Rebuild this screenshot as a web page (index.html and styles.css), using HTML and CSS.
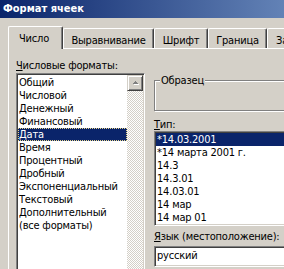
FILE: index.html
```html
<!DOCTYPE html>
<html lang="ru">

<head>
    <meta charset="UTF-8">
    <meta name="viewport" content="width=device-width, initial-scale=1.0">
    <title>Формат ячеек</title>
    <link rel="stylesheet" href="styles.css">
</head>

<body>

    <div class="window">
        <div class="titlebar">Формат ячеек</div>

        <div class="tabs">
            <div class="tab tab-active tab-number">Число</div>
            <div class="tab tab-align">Выравнивание</div>
            <div class="tab tab-font">Шрифт</div>
            <div class="tab tab-border">Граница</div>
            <div class="tab tab-fill">Заливка</div>
        </div>

        <div class="panel">
            <div class="col-left">
                <div class="label"><u>Ч</u>исловые форматы:</div>
                <div class="listbox format-list">
                    <ul class="items">
                        <li class="item">Общий</li>
                        <li class="item">Числовой</li>
                        <li class="item">Денежный</li>
                        <li class="item">Финансовый</li>
                        <li class="item item-selected">Дата</li>
                        <li class="item">Время</li>
                        <li class="item">Процентный</li>
                        <li class="item">Дробный</li>
                        <li class="item">Экспоненциальный</li>
                        <li class="item">Текстовый</li>
                        <li class="item">Дополнительный</li>
                        <li class="item">(все форматы)</li>
                    </ul>
                    <div class="scrollbar">
                        <div class="scroll-up">
                            <svg width="14" height="14" viewBox="0 0 14 14" shape-rendering="crispEdges">
                                <polygon points="5,9 8,6 11,9" fill="#ffffff" />
                                <polygon points="4,8 7,5 10,8" fill="#808080" />
                            </svg>
                        </div>
                    </div>
                </div>
            </div>

            <div class="col-right">
                <div class="groupbox">
                    <span class="group-label">Образец</span>
                </div>

                <div class="label type-label"><u>Т</u>ип:</div>
                <div class="listbox type-list">
                    <ul class="items">
                        <li class="item item-selected">*14.03.2001</li>
                        <li class="item">*14 марта 2001 г.</li>
                        <li class="item">14.3</li>
                        <li class="item">14.3.01</li>
                        <li class="item">14.03.01</li>
                        <li class="item">14 мар</li>
                        <li class="item">14 мар 01</li>
                    </ul>
                </div>

                <div class="label lang-label"><u>Я</u>зык (местоположение):</div>
                <div class="combo">русский</div>
            </div>
        </div>
    </div>

</body>

</html>
```

FILE: styles.css
```css
html,
body {
    height: 100%;
    margin: 0;
    overflow: hidden;
    background-color: #D4D0C8;
    font-family: "DejaVu Sans Condensed", "Liberation Sans", sans-serif;
    font-size: 11px;
    letter-spacing: -0.2px;
    color: #000;
}

.window {
    width: 500px;
}

.titlebar {
    height: 18px;
    line-height: 18px;
    padding-left: 3px;
    color: #fff;
    font-weight: bold;
    letter-spacing: 0;
    background: linear-gradient(to right, #0A246A, #A6CAF0);
}

/* tab strip */

.tabs {
    display: flex;
    align-items: flex-end;
    height: 22px;
    margin-top: 8px;
    padding-left: 8px;
    position: relative;
    z-index: 1;
}

.tab {
    box-sizing: border-box;
    height: 20px;
    padding-top: 5px;
    line-height: 13px;
    text-align: center;
    white-space: nowrap;
    background: #D4D0C8;
    border-top: 1px solid #fff;
    border-left: 1px solid #fff;
    border-right: 1px solid #404040;
    border-top-left-radius: 2px;
    border-top-right-radius: 2px;
    box-shadow: inset -1px 0 #808080;
}

.tab-active {
    height: 23px;
    margin-bottom: -1px;
    padding-right: 3px;
}

.tab-number { width: 55px; }
.tab-align { width: 91px; }
.tab-font { width: 54px; }
.tab-border { width: 59px; }

.tab-fill {
    width: 70px;
    padding-left: 8px;
    text-align: left;
}

/* page body */

.panel {
    display: flex;
    gap: 8px;
    height: 260px;
    margin-left: 8px;
    padding: 10px 0 0 7px;
    border-top: 1px solid #fff;
    border-left: 1px solid #fff;
}

.col-left {
    width: 130px;
}

.col-right {
    flex: 1;
}

.label {
    height: 13px;
    line-height: 13px;
    white-space: nowrap;
}

.listbox {
    box-sizing: border-box;
    background: #fff;
    border: 1px solid;
    border-color: #808080 #fff #fff #808080;
    box-shadow: inset 1px 1px #404040, inset -1px -1px #D4D0C8;
    padding: 1px;
}

.format-list {
    display: flex;
    width: 129px;
    height: 220px;
    margin-top: 1px;
}

.items {
    flex: 1;
    list-style: none;
    margin: 0;
    padding: 0;
}

.format-list .items {
    padding-top: 1px;
}

.item {
    height: 13px;
    line-height: 13px;
    padding-left: 1px;
    white-space: nowrap;
}

.item-selected {
    background: #0A246A;
    color: #fff;
}

.format-list .item-selected {
    outline: 1px dotted #e6d48a;
    outline-offset: -1px;
}

.scrollbar {
    width: 16px;
    background: repeating-conic-gradient(#fff 0 25%, #D4D0C8 0 50%) 0 0 / 2px 2px;
}

.scroll-up {
    box-sizing: border-box;
    height: 16px;
    background: #D4D0C8;
    border: 1px solid;
    border-color: #D4D0C8 #404040 #404040 #D4D0C8;
    box-shadow: inset 1px 1px #fff, inset -1px -1px #808080;
}

.scroll-up svg {
    display: block;
}

/* right side */

.groupbox {
    position: relative;
    box-sizing: border-box;
    height: 31px;
    margin-top: 21px;
    border: 1px solid #808080;
    box-shadow: inset 1px 1px #fff, 1px 1px #fff;
}

.group-label {
    position: absolute;
    left: 5px;
    top: -7px;
    padding: 0 1px;
    line-height: 13px;
    background: #D4D0C8;
}

.type-label {
    margin-top: 7px;
}

.type-list {
    height: 95px;
    padding: 1px;
}

.lang-label {
    margin-top: 4px;
}

.combo {
    box-sizing: border-box;
    height: 21px;
    margin-top: 3px;
    padding-left: 2px;
    line-height: 17px;
    background: #fff;
    border: 1px solid;
    border-color: #808080 #fff #fff #808080;
    box-shadow: inset 1px 1px #404040, inset -1px -1px #D4D0C8;
}
```
